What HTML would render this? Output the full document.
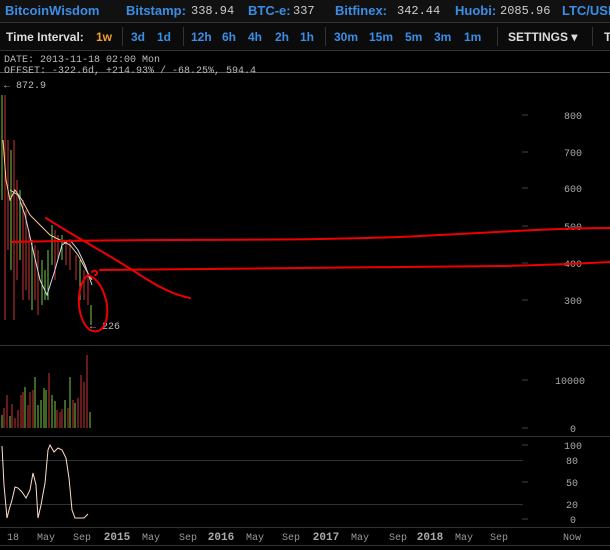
<!DOCTYPE html>
<html><head><meta charset="utf-8"><style>
body{margin:0;width:610px;height:550px;background:#000;overflow:hidden;font-family:"Liberation Sans",sans-serif;position:relative}
.hd{position:absolute;left:0;top:0;width:610px;height:22px;background:#111;border-bottom:1px solid #333;font-size:13px;font-weight:bold;color:#3a8ee6;white-space:nowrap}
.hd span{position:absolute;top:3px}
.hd .v{color:#ccc;font-family:"Liberation Mono",monospace;font-weight:normal;font-size:12px}
.tb{position:absolute;left:0;top:23px;width:610px;height:27px;background:#0b0b0b;border-bottom:1px solid #333;font-size:12px;font-weight:bold;color:#3a8ee6;white-space:nowrap}
.tb span{position:absolute;top:7px}
.sep{position:absolute;top:4px;width:1px;height:19px;background:#333}
.m{font-family:"Liberation Mono",monospace;font-size:10px;color:#bbb;position:absolute;white-space:nowrap}
</style></head><body>
<div class="hd">
<span style="left:5px;color:#3a8ee6">BitcoinWisdom</span>
<span style="left:126px">Bitstamp:</span><span class="v" style="left:191px;top:4px">338.94</span>
<span style="left:248px">BTC-e:</span><span class="v" style="left:293px;top:4px">337</span>
<span style="left:335px">Bitfinex:</span><span class="v" style="left:397px;top:4px">342.44</span>
<span style="left:455px">Huobi:</span><span class="v" style="left:500px;top:4px">2085.96</span>
<span style="left:562px">LTC/USD</span>
</div>
<div class="tb">
<span style="left:6px;color:#ddd">Time Interval:</span>
<span style="left:96px;color:#f0a030">1w</span>
<div class="sep" style="left:122px"></div>
<span style="left:131px">3d</span><span style="left:157px">1d</span>
<div class="sep" style="left:183px"></div>
<span style="left:191px">12h</span><span style="left:222px">6h</span><span style="left:248px">4h</span><span style="left:275px">2h</span><span style="left:300px">1h</span>
<div class="sep" style="left:325px"></div>
<span style="left:334px">30m</span><span style="left:369px">15m</span><span style="left:405px">5m</span><span style="left:434px">3m</span><span style="left:464px">1m</span>
<div class="sep" style="left:497px"></div>
<span style="left:508px;color:#ddd">SETTINGS ▾</span>
<div class="sep" style="left:592px"></div>
<span style="left:604px;color:#ddd">T</span>
</div>
<div class="m" style="left:4px;top:55px">DATE: 2013-11-18 02:00 Mon</div>
<div style="position:absolute;left:0;top:72px;width:610px;height:1px;background:#555"></div>
<div class="m" style="left:4px;top:66px">OFFSET: -322.6d, +214.93% / -68.25%, 594.4</div>
<div class="m" style="left:4px;top:81px">← 872.9</div>
<div class="m" style="left:90px;top:322px">← 226</div>
<svg width="610" height="550" style="position:absolute;left:0;top:0" xmlns="http://www.w3.org/2000/svg">
<g stroke="#333" stroke-width="1">
<line x1="0" y1="345.5" x2="610" y2="345.5"/><line x1="0" y1="436.5" x2="610" y2="436.5"/>
<line x1="0" y1="460.5" x2="523" y2="460.5"/><line x1="0" y1="504.5" x2="523" y2="504.5"/>
<line x1="0" y1="527.5" x2="610" y2="527.5"/><line x1="0" y1="545.5" x2="610" y2="545.5"/>
</g>
<g stroke="#444"><line x1="522" y1="115" x2="528" y2="115"/><line x1="522" y1="152" x2="528" y2="152"/><line x1="522" y1="188" x2="528" y2="188"/><line x1="522" y1="226" x2="528" y2="226"/><line x1="522" y1="263" x2="528" y2="263"/><line x1="522" y1="300" x2="528" y2="300"/><line x1="522" y1="380" x2="528" y2="380"/><line x1="522" y1="428" x2="528" y2="428"/><line x1="522" y1="445" x2="528" y2="445"/><line x1="522" y1="482" x2="528" y2="482"/><line x1="522" y1="519" x2="528" y2="519"/></g>
<g font-family="Liberation Mono,monospace" font-size="10" fill="#aaa" text-anchor="end">
<text x="582" y="119">800</text><text x="582" y="156">700</text><text x="582" y="192">600</text><text x="582" y="230">500</text><text x="582" y="267">400</text><text x="582" y="304">300</text>
<text x="585" y="384">10000</text><text x="576" y="432">0</text>
<text x="582" y="449">100</text><text x="578" y="464">80</text><text x="578" y="486">50</text><text x="578" y="508">20</text><text x="576" y="523">0</text>
</g>
<g font-family="Liberation Mono,monospace" font-size="10" fill="#999" text-anchor="middle">
<text x="13" y="540">18</text><text x="46" y="540">May</text><text x="82" y="540">Sep</text><text x="151" y="540">May</text><text x="188" y="540">Sep</text><text x="255" y="540">May</text><text x="291" y="540">Sep</text><text x="360" y="540">May</text><text x="398" y="540">Sep</text><text x="464" y="540">May</text><text x="499" y="540">Sep</text><text x="572" y="540">Now</text>
</g>
<g font-family="Liberation Mono,monospace" font-size="11" font-weight="bold" fill="#aaa" text-anchor="middle">
<text x="117" y="540">2015</text><text x="221" y="540">2016</text><text x="326" y="540">2017</text><text x="430" y="540">2018</text>
</g>
<g stroke-width="1">
<line x1="2" y1="95" x2="2" y2="200" stroke="#7c4"/><line x1="5" y1="95" x2="5" y2="320" stroke="#c33"/>
<line x1="8" y1="140" x2="8" y2="250" stroke="#c33"/><line x1="11" y1="150" x2="11" y2="270" stroke="#7c4"/>
<line x1="14" y1="140" x2="14" y2="320" stroke="#c33"/><line x1="17" y1="180" x2="17" y2="280" stroke="#c33"/>
<line x1="20" y1="190" x2="20" y2="260" stroke="#7c4"/><line x1="23" y1="200" x2="23" y2="300" stroke="#c33"/>
<line x1="26" y1="210" x2="26" y2="290" stroke="#c33"/><line x1="29" y1="230" x2="29" y2="300" stroke="#c33"/>
<line x1="32" y1="240" x2="32" y2="310" stroke="#7c4"/><line x1="35" y1="245" x2="35" y2="300" stroke="#c33"/>
<line x1="38" y1="250" x2="38" y2="315" stroke="#c33"/><line x1="42" y1="260" x2="42" y2="305" stroke="#7c4"/>
<line x1="45" y1="270" x2="45" y2="300" stroke="#7c4"/><line x1="48" y1="250" x2="48" y2="300" stroke="#7c4"/>
<line x1="52" y1="225" x2="52" y2="265" stroke="#7c4"/><line x1="55" y1="230" x2="55" y2="280" stroke="#c33"/>
<line x1="58" y1="235" x2="58" y2="260" stroke="#c33"/><line x1="62" y1="235" x2="62" y2="260" stroke="#7c4"/>
<line x1="66" y1="240" x2="66" y2="265" stroke="#c33"/><line x1="70" y1="240" x2="70" y2="270" stroke="#c33"/>
<line x1="76" y1="255" x2="76" y2="280" stroke="#c33"/><line x1="80" y1="260" x2="80" y2="300" stroke="#7c4"/>
<line x1="84" y1="270" x2="84" y2="300" stroke="#c33"/><line x1="88" y1="275" x2="88" y2="305" stroke="#c33"/>
<line x1="91" y1="305" x2="91" y2="325" stroke="#7c4"/>
</g>
<polyline fill="none" stroke="#fc9" stroke-width="1" points="3,140 6,180 10,200 15,190 22,200 30,215 40,225 50,235 60,240 70,245 78,255 85,268 92,280"/>
<polyline fill="none" stroke="#cde" stroke-width="1" points="10,190 18,195 25,215 33,250 40,280 47,295 55,270 62,245 70,240 78,250 85,265 92,285"/>
<g fill="none" stroke="#e00" stroke-width="2" stroke-linecap="round">
<path d="M12,242 C150,238 300,242 420,236 C500,232 560,228 610,228"/>
<path d="M100,270 C250,268 400,267 500,266 C560,265 590,263 610,262"/>
<path d="M46,218 C80,240 110,255 140,275 C160,288 175,295 190,298"/>
<path d="M92,272 C95,268 100,274 95,275"/>
<path d="M88,275 C75,285 76,320 90,330 C105,337 110,315 106,300 C102,285 96,278 88,275"/>
</g>
<g stroke-width="1">
<line x1="2" y1="415" x2="2" y2="428" stroke="#7c4"/><line x1="4" y1="408" x2="4" y2="428" stroke="#c33"/><line x1="7" y1="395" x2="7" y2="428" stroke="#c33"/><line x1="10" y1="416" x2="10" y2="428" stroke="#7c4"/><line x1="12" y1="404" x2="12" y2="428" stroke="#c33"/><line x1="15" y1="418" x2="15" y2="428" stroke="#c33"/><line x1="18" y1="410" x2="18" y2="428" stroke="#c33"/><line x1="21" y1="395" x2="21" y2="428" stroke="#c33"/><line x1="23" y1="392" x2="23" y2="428" stroke="#c33"/><line x1="25" y1="387" x2="25" y2="428" stroke="#7c4"/><line x1="28" y1="405" x2="28" y2="428" stroke="#c33"/><line x1="30" y1="392" x2="30" y2="428" stroke="#c33"/><line x1="33" y1="390" x2="33" y2="428" stroke="#c33"/><line x1="35" y1="377" x2="35" y2="428" stroke="#7c4"/><line x1="38" y1="405" x2="38" y2="428" stroke="#7c4"/><line x1="41" y1="400" x2="41" y2="428" stroke="#7c4"/><line x1="44" y1="388" x2="44" y2="428" stroke="#7c4"/><line x1="46" y1="390" x2="46" y2="428" stroke="#7c4"/><line x1="49" y1="373" x2="49" y2="428" stroke="#c33"/><line x1="52" y1="395" x2="52" y2="428" stroke="#7c4"/><line x1="55" y1="401" x2="55" y2="428" stroke="#7c4"/><line x1="57" y1="410" x2="57" y2="428" stroke="#c33"/><line x1="60" y1="412" x2="60" y2="428" stroke="#c33"/><line x1="62" y1="409" x2="62" y2="428" stroke="#c33"/><line x1="65" y1="400" x2="65" y2="428" stroke="#7c4"/><line x1="68" y1="408" x2="68" y2="428" stroke="#c33"/><line x1="70" y1="377" x2="70" y2="428" stroke="#7c4"/><line x1="73" y1="400" x2="73" y2="428" stroke="#c33"/><line x1="75" y1="403" x2="75" y2="428" stroke="#7c4"/><line x1="78" y1="398" x2="78" y2="428" stroke="#c33"/><line x1="81" y1="375" x2="81" y2="428" stroke="#c33"/><line x1="84" y1="382" x2="84" y2="428" stroke="#c33"/><line x1="87" y1="355" x2="87" y2="428" stroke="#c33"/><line x1="90" y1="412" x2="90" y2="428" stroke="#7c4"/>
</g>
<polyline fill="none" stroke="#fdc" stroke-width="1" points="2,446 4,485 7,518 9,510 12,500 15,487 18,488 22,492 26,498 30,490 33,473 36,485 38,518 41,505 45,483 48,450 50,445 54,452 58,448 62,450 66,458 69,478 72,510 75,518 80,518 84,518 88,514"/>
</svg>
</body></html>
